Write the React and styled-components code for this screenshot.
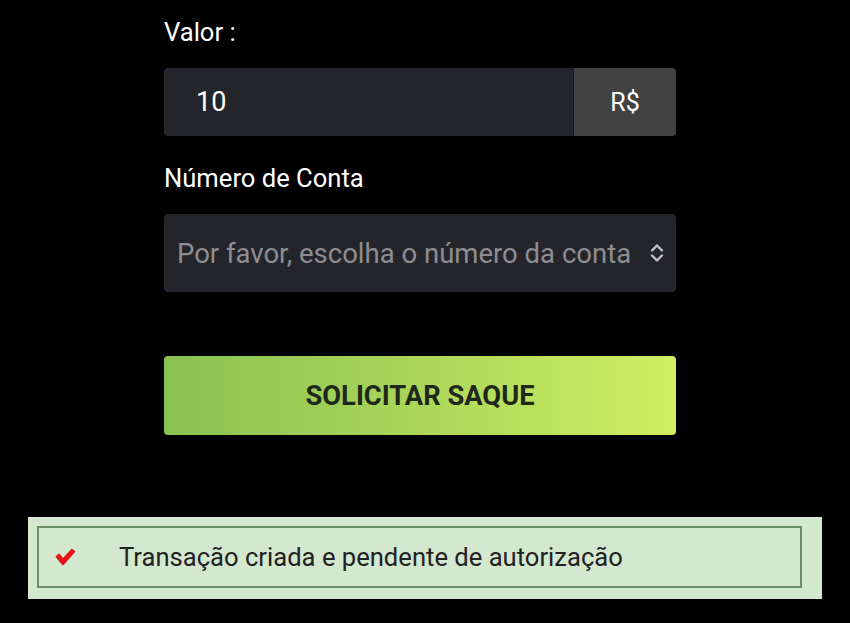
import React from 'react';
import styled, { createGlobalStyle } from 'styled-components';

const GlobalStyle = createGlobalStyle`
  html, body {
    margin: 0;
    padding: 0;
    background: #000;
  }
  body {
    font-family: Roboto, "Noto Sans", Arial, sans-serif;
  }
`;

const Page = styled.div`
  width: 850px;
  height: 623px;
  background: #000;
  overflow: hidden;
  padding-top: 17px;
  box-sizing: border-box;
`;

const Form = styled.form`
  width: 512px;
  margin-left: 164px;
  display: flex;
  flex-direction: column;
`;

const Label = styled.label`
  color: #fff;
  font-size: 25.6px;
  line-height: 30px;
  margin-bottom: 21px;
`;

const InputGroup = styled.div`
  display: flex;
  height: 68px;
  border-radius: 4px;
  overflow: hidden;
  margin-bottom: 27px;
`;

const AmountInput = styled.div`
  flex: 1;
  background: #24252b;
  color: #fff;
  font-size: 27px;
  display: flex;
  align-items: center;
  padding-left: 32px;
`;

const Addon = styled.div`
  width: 102px;
  background: #424242;
  color: #fff;
  font-size: 25px;
  display: flex;
  align-items: center;
  justify-content: center;
  border-left: 1px solid #1a1a1a;
`;

const Select = styled.div`
  height: 78px;
  background: #24252b;
  border-radius: 4px;
  display: flex;
  align-items: center;
  justify-content: space-between;
  padding: 0 11px 0 13px;
  color: #8d8d91;
  font-size: 27.5px;
  white-space: nowrap;
  margin-bottom: 64px;
`;

const SubmitButton = styled.button`
  height: 79px;
  border: none;
  border-radius: 4px;
  background: linear-gradient(90deg, #8bc152 0%, #a4d158 40%, #cfef62 100%);
  color: #1e291c;
  font-family: Roboto, Arial, sans-serif;
  font-weight: 700;
  font-size: 27.3px;
  cursor: pointer;
`;

const AlertBox = styled.div`
  margin: 82px 28px 0;
  background: #d4e8d0;
  padding: 9px 20px 11px 9px;
`;

const AlertInner = styled.div`
  border: 2px solid #6a8f66;
  height: 62px;
  box-sizing: border-box;
  display: flex;
  align-items: center;
  padding-left: 16px;
  color: #222;
  font-size: 25.6px;
  white-space: nowrap;
`;

const CheckIcon = styled.svg`
  width: 21px;
  height: 18px;
  margin-right: 43px;
  flex-shrink: 0;
`;

const Chevrons = () => (
  <svg width="16" height="22" viewBox="0 0 16 22" fill="none" stroke="#c2c2c5" strokeWidth="2.4" strokeLinecap="round" strokeLinejoin="round">
    <path d="M3 8.5 L8 3.5 L13 8.5" />
    <path d="M3 13.5 L8 18.5 L13 13.5" />
  </svg>
);

export default function App() {
  return (
    <>
      <GlobalStyle />
      <Page>
        <Form onSubmit={(e) => e.preventDefault()}>
          <Label>Valor :</Label>
          <InputGroup>
            <AmountInput>10</AmountInput>
            <Addon>R$</Addon>
          </InputGroup>
          <Label>Número de Conta</Label>
          <Select>
            <span>Por favor, escolha o número da conta</span>
            <Chevrons />
          </Select>
          <SubmitButton type="submit">SOLICITAR SAQUE</SubmitButton>
        </Form>
        <AlertBox>
          <AlertInner>
            <CheckIcon viewBox="0 0 21 18">
              <path d="M0.5 9 Q1 7.5 2.5 6.5 L4.5 5.5 L8 10 L16.5 0.8 Q18.8 1.5 20.5 3.5 L8.5 17.2 Q7.5 17.5 6.8 16.6 Z" fill="#e8141a" />
            </CheckIcon>
            Transação criada e pendente de autorização
          </AlertInner>
        </AlertBox>
      </Page>
    </>
  );
}
